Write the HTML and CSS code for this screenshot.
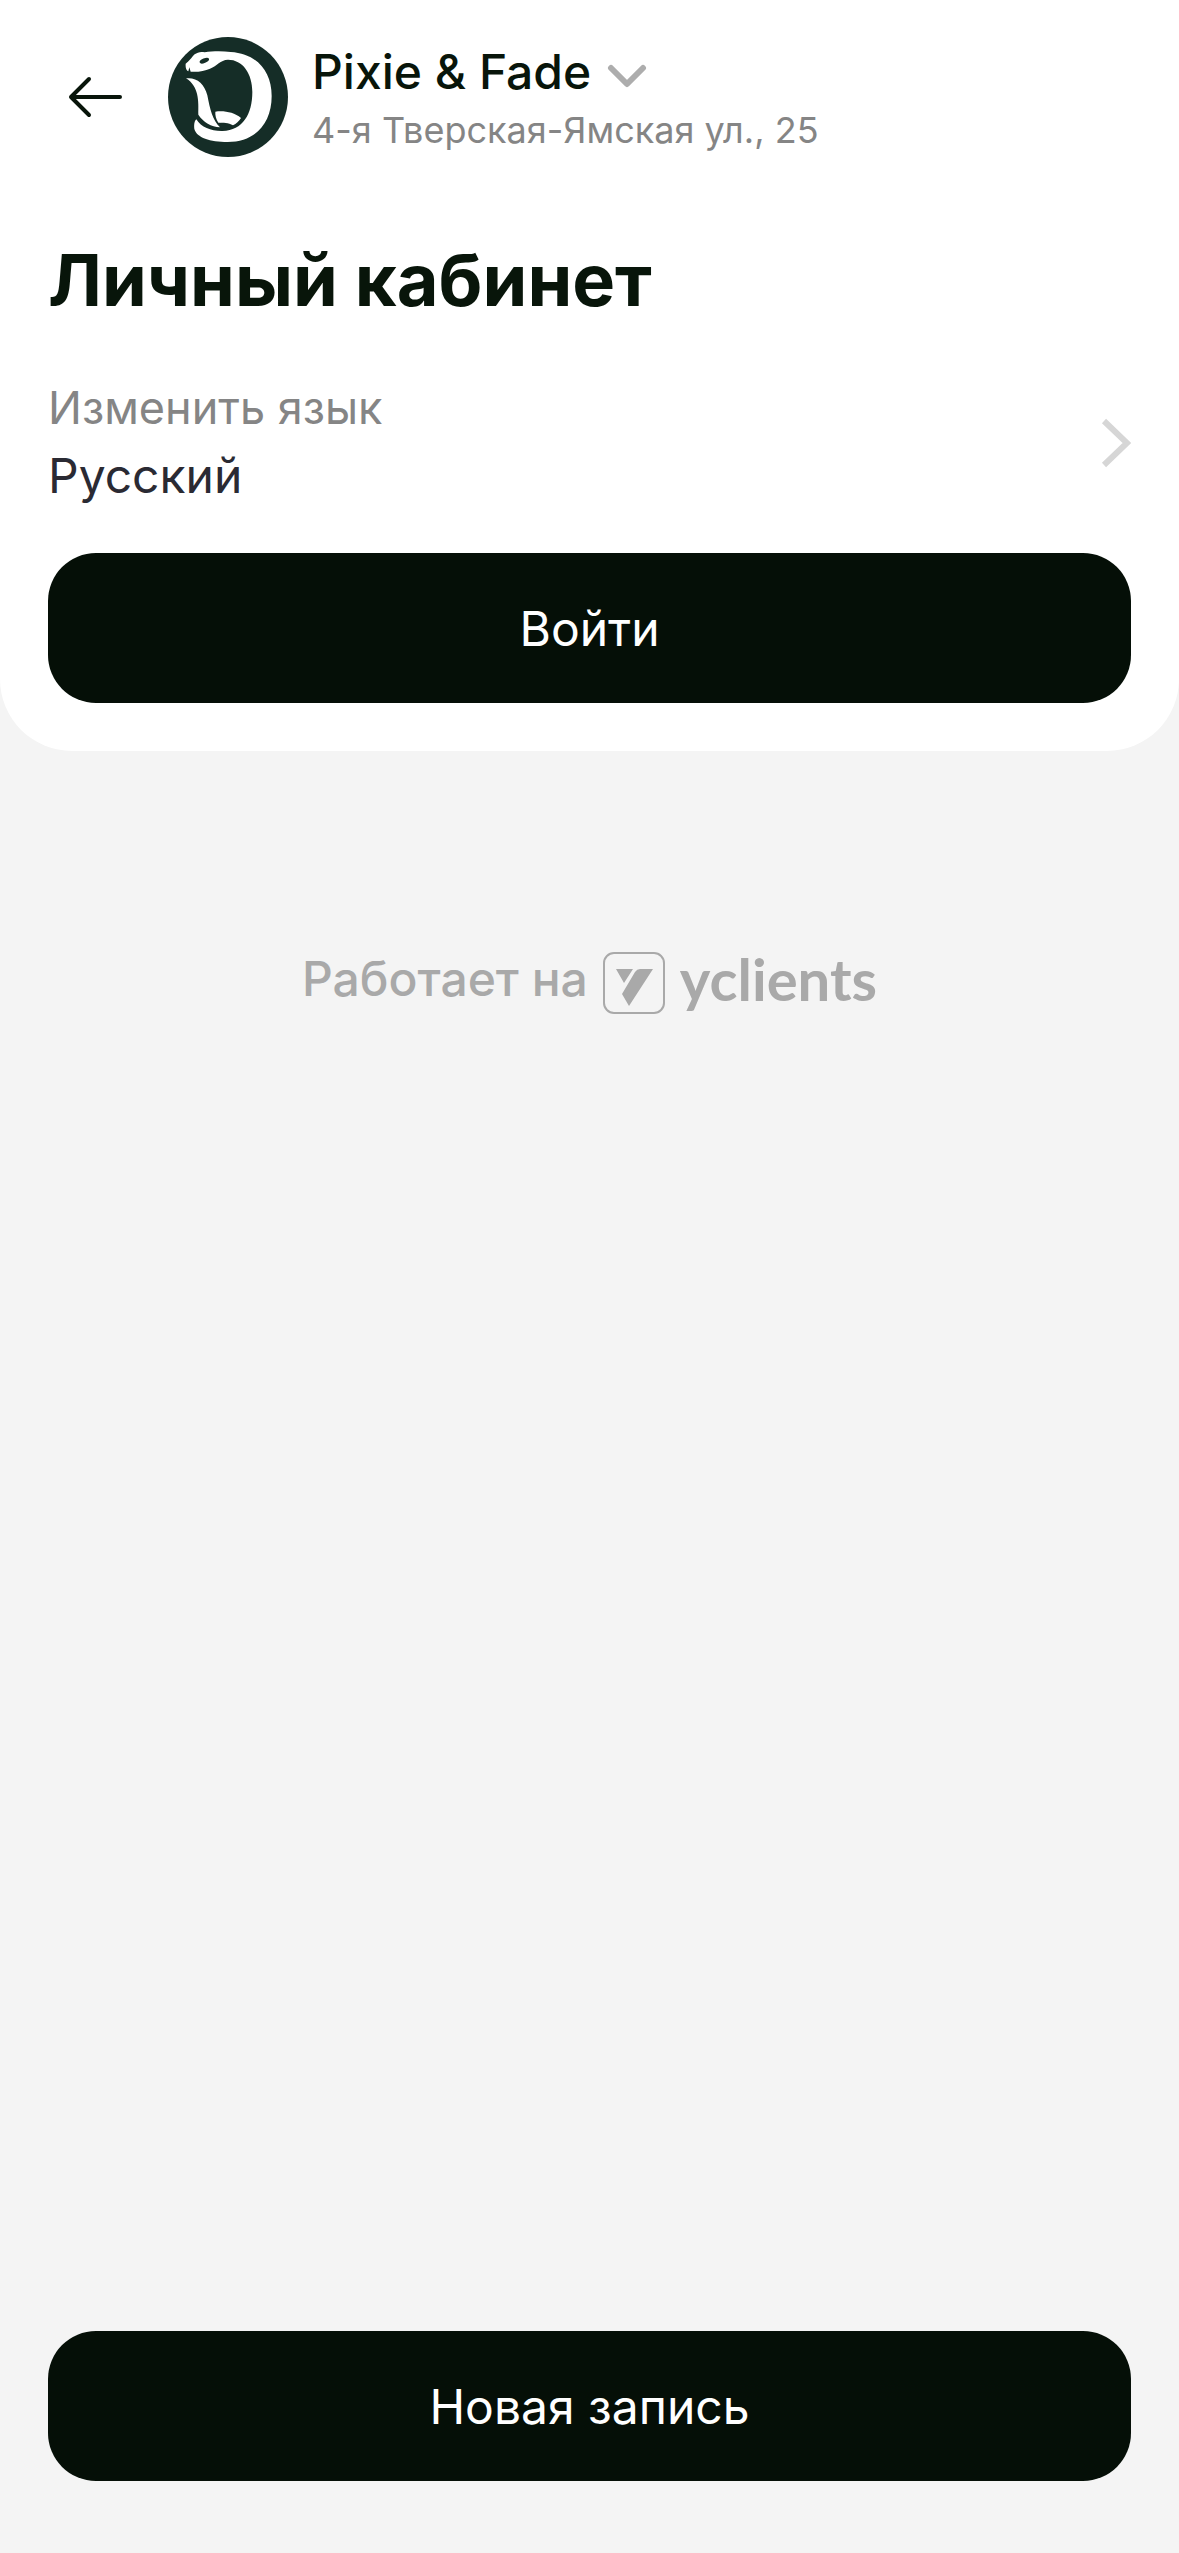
FILE: index.html
```html
<!DOCTYPE html>
<html lang="ru">
<head>
  <meta charset="utf-8">
  <meta name="viewport" content="width=device-width, initial-scale=1">
  <title>Личный кабинет</title>
  <link rel="stylesheet" href="styles.css">
</head>
<body>
  <div class="page">
    <div class="card">
      <header class="header">
        <button class="back" type="button" aria-label="Назад">
          <svg class="back-icon" viewBox="0 0 56 42" aria-hidden="true">
            <path d="M3 21H52M21 3L3 21L21 39"/>
          </svg>
        </button>
        <svg class="logo" viewBox="24 18 360 360" aria-hidden="true">
          <circle class="logo-back" cx="204" cy="198" r="180"/>
          <path class="logo-snake" d="M77 98C86 93 96 78 104 70C112 64 122 61 134 64C158 60 188 60 212 63C290 68 335 120 335 195C335 278 285 333 203 333C150 333 110 320 103 294C101 280 104 268 109 265C124 290 155 301 188 300C248 298 277 250 277 183C277 127 248 86 204 86C180 87 172 104 150 113C134 120 112 124 92 122L88 109L85 121C78 118 76 108 77 98Z"/>
          <path class="logo-snake" d="M78 142C110 138 133 158 142 193C150 235 158 268 180 289C154 288 130 273 115 251C116 210 117 166 78 142Z"/>
          <path class="logo-snake" d="M166 242C190 238 222 243 243 261C237 271 229 278 219 283C205 274 190 276 175 275C168 264 165 252 166 242Z"/>
          <ellipse class="logo-back" cx="133" cy="89" rx="15" ry="7" transform="rotate(-22 133 89)"/>
        </svg>
        <div class="salon">
          <button class="salon-name" type="button">
            <span>Pixie &amp; Fade</span>
            <svg class="chevron-down" viewBox="0 0 40 26" aria-hidden="true">
              <path d="M4 5L20 21L36 5"/>
            </svg>
          </button>
          <div class="salon-address">4-я Тверская-Ямская ул., 25</div>
        </div>
      </header>
      <main class="account">
        <h1 class="title">Личный кабинет</h1>
        <button class="language" type="button">
          <span class="language-text">
            <span class="language-label">Изменить язык</span>
            <span class="language-value">Русский</span>
          </span>
          <svg class="chevron-right" viewBox="0 0 30 50" aria-hidden="true">
            <path d="M3 3L26 25L3 47"/>
          </svg>
        </button>
        <button class="primary" type="button">Войти</button>
      </main>
    </div>
    <a class="powered" href="#">
      <span class="powered-text">Работает на</span>
      <svg class="powered-icon" viewBox="0 0 62 62" aria-hidden="true">
        <rect x="1" y="1" width="60" height="60" rx="10"/>
        <path d="M13 17H30L21 31ZM37 17H50L26 54L19 42L32 20Q34 17 37 17Z"/>
      </svg>
      <span class="powered-brand">yclients</span>
    </a>
    <div class="bottom">
      <button class="primary" type="button">Новая запись</button>
    </div>
  </div>
</body>
</html>
```
FILE: styles.css
```css
* {
  box-sizing: border-box;
}

body {
  margin: 0;
  background: #f4f4f4;
  color: #08150a;
  font-family: Inter, "Liberation Sans", sans-serif;
}

button {
  margin: 0;
  padding: 0;
  border: 0;
  background: none;
  color: inherit;
  font: inherit;
  text-align: left;
  cursor: pointer;
}

svg {
  display: block;
  flex: none;
}

.page {
  display: flex;
  flex-direction: column;
  min-height: 100vh;
}

.card {
  padding: 36px 48px 48px;
  border-radius: 0 0 72px 72px;
  background: #fff;
}

.header {
  display: flex;
  align-items: center;
  gap: 24px;
}

.back {
  display: flex;
  align-items: center;
  justify-content: center;
  width: 96px;
  height: 96px;
}

.back-icon {
  width: 56px;
  height: 42px;
  fill: none;
  stroke: #08150a;
  stroke-width: 4;
  stroke-linecap: round;
  stroke-linejoin: round;
}

.logo {
  width: 120px;
  height: 120px;
}

.logo-back {
  fill: #152d27;
}

.logo-snake {
  fill: #fff;
}

.salon {
  padding-top: 6px;
}

.salon-name {
  display: flex;
  align-items: center;
  gap: 16px;
  font-size: 48px;
  font-weight: 500;
  line-height: 60px;
}

.chevron-down {
  width: 40px;
  height: 26px;
  margin-top: 8px;
  fill: none;
  stroke: #adadad;
  stroke-width: 6;
  stroke-linecap: round;
  stroke-linejoin: round;
}

.salon-address {
  color: #858585;
  font-size: 36px;
  line-height: 56px;
}

.title {
  margin: 77px 0 50px;
  font-size: 72px;
  font-weight: 700;
  line-height: 90px;
}

.language {
  display: flex;
  align-items: center;
  justify-content: space-between;
  width: 100%;
}

.language-text {
  display: flex;
  flex-direction: column;
}

.language-label {
  color: #858585;
  font-size: 45px;
  line-height: 66px;
}

.language-value {
  color: #2a2a33;
  font-size: 48px;
  line-height: 70px;
}

.chevron-right {
  width: 30px;
  height: 50px;
  fill: none;
  stroke: #d6d6d6;
  stroke-width: 6;
}

.primary {
  width: 100%;
  height: 150px;
  border-radius: 48px;
  background: #050f07;
  color: #fff;
  font-size: 48px;
  text-align: center;
}

.account .primary {
  margin-top: 42px;
}

.powered {
  display: flex;
  align-items: flex-start;
  justify-content: center;
  gap: 15px;
  margin-top: 201px;
  color: #a9a9a9;
  text-decoration: none;
}

.powered-text {
  font-size: 48px;
  font-weight: 500;
  line-height: 54px;
}

.powered-icon {
  width: 62px;
  height: 62px;
  fill: #a9a9a9;
}

.powered-icon rect {
  fill: none;
  stroke: #a9a9a9;
  stroke-width: 2;
}

.powered-brand {
  font-family: Lato, "Liberation Sans", sans-serif;
  font-size: 58px;
  font-weight: 700;
  line-height: 54px;
}

.bottom {
  margin-top: auto;
  padding: 48px 48px 72px;
}
```
